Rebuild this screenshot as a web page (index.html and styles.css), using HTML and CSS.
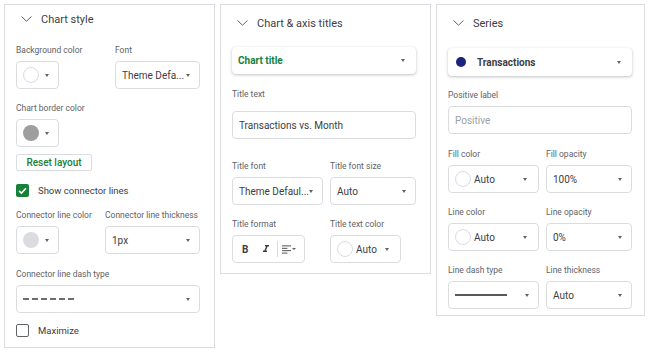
FILE: index.html
```html
<!DOCTYPE html>
<html lang="en">
<head>
  <meta charset="UTF-8">
  <meta name="viewport" content="width=device-width, initial-scale=1.0">
  <title>Chart editor</title>
  <link rel="stylesheet" href="styles.css">
</head>
<body>
  <div class="panels">

    <section class="panel">
      <div class="head">
        <svg class="chev" viewBox="0 0 11 6"><polyline points="0.5,0.5 5.5,5.2 10.5,0.5"/></svg>
        <span>Chart style</span>
      </div>
      <div class="pair first">
        <div class="field">
          <span class="label">Background color</span>
          <div class="ctrl color"><span class="swatch"></span><span class="arrow"></span></div>
        </div>
        <div class="field">
          <span class="label">Font</span>
          <div class="ctrl w85"><span class="val">Theme Defa...</span><span class="arrow"></span></div>
        </div>
      </div>
      <div class="field gap13">
        <span class="label">Chart border color</span>
        <div class="ctrl color"><span class="swatch grey"></span><span class="arrow"></span></div>
      </div>
      <button class="reset">Reset layout</button>
      <div class="check on gap13">
        <span class="box"><svg viewBox="0 0 13 13"><polyline points="3,6.8 5.4,9.1 10,4.2"/></svg></span>
        <span>Show connector lines</span>
      </div>
      <div class="pair gap12">
        <div class="field">
          <span class="label">Connector line color</span>
          <div class="ctrl color"><span class="swatch light"></span><span class="arrow"></span></div>
        </div>
        <div class="field">
          <span class="label">Connector line thickness</span>
          <div class="ctrl w95"><span class="val">1px</span><span class="arrow"></span></div>
        </div>
      </div>
      <div class="field gap14">
        <span class="label">Connector line dash type</span>
        <div class="ctrl"><span class="val"><svg class="dash" viewBox="0 0 52 2"><line x1="0" y1="1" x2="52" y2="1"/></svg></span><span class="arrow"></span></div>
      </div>
      <div class="check gap11">
        <span class="box"></span>
        <span>Maximize</span>
      </div>
    </section>

    <section class="panel titles">
      <div class="head tall">
        <svg class="chev" viewBox="0 0 11 6"><polyline points="0.5,0.5 5.5,5.2 10.5,0.5"/></svg>
        <span>Chart &amp; axis titles</span>
      </div>
      <div class="ctrl raised short">
        <span class="val strong green">Chart title</span><span class="arrow"></span>
      </div>
      <div class="field gap14">
        <span class="label wide">Title text</span>
        <div class="ctrl"><span class="val">Transactions vs. Month</span></div>
      </div>
      <div class="grid gap21">
        <div class="field">
          <span class="label">Title font</span>
          <div class="ctrl"><span class="val">Theme Defaul...</span><span class="arrow"></span></div>
        </div>
        <div class="field">
          <span class="label">Title font size</span>
          <div class="ctrl"><span class="val">Auto</span><span class="arrow"></span></div>
        </div>
      </div>
      <div class="grid gap13">
        <div class="field">
          <span class="label">Title format</span>
          <div class="ctrl format">
            <span class="bold">B</span>
            <svg class="italic" viewBox="0 0 24 24"><path d="M10 4v3h2.21l-3.42 8H6v3h8v-3h-2.21l3.42-8H18V4z"/></svg>
            <span class="sep"></span>
            <svg class="align" viewBox="0 0 10 9"><path d="M0 0.5h10M0 3.2h6M0 5.8h10M0 8.5h6"/></svg>
            <span class="arrow tiny"></span>
          </div>
        </div>
        <div class="field">
          <span class="label">Title text color</span>
          <div class="ctrl auto w71"><span class="swatch"></span><span class="val">Auto</span><span class="arrow"></span></div>
        </div>
      </div>
    </section>

    <section class="panel series">
      <div class="head tall">
        <svg class="chev" viewBox="0 0 11 6"><polyline points="0.5,0.5 5.5,5.2 10.5,0.5"/></svg>
        <span>Series</span>
      </div>
      <div class="ctrl raised">
        <span class="dot"></span><span class="val strong">Transactions</span><span class="arrow"></span>
      </div>
      <div class="field gap13">
        <span class="label">Positive label</span>
        <div class="ctrl"><span class="val hint">Positive</span></div>
      </div>
      <div class="grid gap14">
        <div class="field">
          <span class="label">Fill color</span>
          <div class="ctrl auto"><span class="swatch"></span><span class="val">Auto</span><span class="arrow"></span></div>
        </div>
        <div class="field">
          <span class="label">Fill opacity</span>
          <div class="ctrl"><span class="val">100%</span><span class="arrow"></span></div>
        </div>
      </div>
      <div class="grid gap13">
        <div class="field">
          <span class="label">Line color</span>
          <div class="ctrl auto"><span class="swatch"></span><span class="val">Auto</span><span class="arrow"></span></div>
        </div>
        <div class="field">
          <span class="label">Line opacity</span>
          <div class="ctrl"><span class="val">0%</span><span class="arrow"></span></div>
        </div>
      </div>
      <div class="grid gap13">
        <div class="field">
          <span class="label">Line dash type</span>
          <div class="ctrl"><span class="val"><svg class="solid" viewBox="0 0 52 2"><line x1="0" y1="1" x2="52" y2="1"/></svg></span><span class="arrow"></span></div>
        </div>
        <div class="field">
          <span class="label">Line thickness</span>
          <div class="ctrl"><span class="val">Auto</span><span class="arrow"></span></div>
        </div>
      </div>
    </section>

  </div>
</body>
</html>
```

FILE: styles.css
```css
body {
  margin: 0;
  background: #ffffff;
  color: #3c4043;
  font-family: Roboto, "Liberation Sans", Arial, sans-serif;
}
.panels {
  display: flex;
  align-items: flex-start;
  gap: 5px;
  padding: 4px 0 0 4px;
}
.panel {
  box-sizing: border-box;
  width: 211px;
  border: 1px solid #dadce0;
  padding: 0 14px 10px 11px;
}
.panel.series {
  width: 209px;
  padding-right: 12px;
  padding-bottom: 6px;
}
.head {
  height: 28px;
  display: flex;
  align-items: center;
  gap: 9px;
  padding-left: 5px;
  font-size: 11px;
  color: #3c4043;
}
.head.tall {
  height: 36px;
}
.chev {
  width: 11px;
  height: 6px;
  fill: none;
  stroke: #5f6368;
  stroke-width: 1;
}
.label {
  display: block;
  height: 12px;
  line-height: 12px;
  margin-bottom: 5px;
  font-size: 8.5px;
  color: #5f6368;
  white-space: nowrap;
}
.label.wide {
  margin-bottom: 11px;
}
.ctrl {
  box-sizing: border-box;
  height: 28px;
  display: flex;
  align-items: center;
  padding: 0 9px 0 6px;
  border: 1px solid #dadce0;
  border-radius: 4px;
  font-size: 10px;
  color: #3c4043;
}
.ctrl .val {
  flex: 1;
  display: flex;
  align-items: center;
  white-space: nowrap;
  overflow: hidden;
}
.arrow {
  flex: none;
  width: 0;
  height: 0;
  border-left: 2.5px solid transparent;
  border-right: 2.5px solid transparent;
  border-top: 3px solid #5f6368;
}
.pair {
  display: flex;
  justify-content: space-between;
}
.pair.first {
  margin-top: 11px;
}
.grid {
  display: grid;
  grid-template-columns: 91px 86px;
  column-gap: 7px;
  align-items: start;
}
.gap11 { margin-top: 11px; }
.gap12 { margin-top: 12px; }
.gap13 { margin-top: 13px; }
.gap14 { margin-top: 14px; }
.gap21 { margin-top: 21px; }

.ctrl.color {
  width: 43px;
  justify-content: space-between;
}
.w85 { width: 85px; }
.w95 { width: 95px; }
.w71 { width: 71px; }
.swatch {
  box-sizing: border-box;
  flex: none;
  width: 16px;
  height: 16px;
  border-radius: 50%;
  border: 1px solid #dadce0;
  background: #ffffff;
}
.swatch.grey {
  border: none;
  background: #9e9e9e;
}
.swatch.light {
  border: none;
  background: #dadce0;
}
.ctrl.auto {
  padding-right: 11px;
}
.ctrl.auto .swatch {
  margin-right: 3px;
}
.reset {
  display: block;
  box-sizing: border-box;
  height: 17px;
  width: 76px;
  margin-top: 7px;
  padding: 0;
  border: 1px solid #dadce0;
  border-radius: 2px;
  background: #ffffff;
  color: #188038;
  font-family: inherit;
  font-size: 10px;
  font-weight: 500;
}
.check {
  display: flex;
  align-items: center;
  gap: 9px;
  height: 13px;
  font-size: 9.5px;
  color: #3c4043;
}
.check .box {
  box-sizing: border-box;
  width: 13px;
  height: 13px;
  border: 1.5px solid #5f6368;
  border-radius: 2px;
}
.check.on .box {
  border: none;
  background: #188038;
}
.check .box svg {
  display: block;
  width: 13px;
  height: 13px;
  fill: none;
  stroke: #ffffff;
  stroke-width: 1.6;
}
.dash {
  width: 52px;
  height: 2px;
  stroke: #3c4043;
  stroke-width: 1.6;
  stroke-dasharray: 6 3;
}
.solid {
  width: 52px;
  height: 2px;
  stroke: #202124;
  stroke-width: 1.4;
}
.ctrl.raised {
  border: none;
  box-shadow: 0 1px 3px rgba(60, 64, 67, 0.3), 0 0 1px rgba(60, 64, 67, 0.15);
  padding-right: 11px;
  margin-top: 7px;
}
.ctrl.raised.short {
  height: 27px;
  margin-top: 6px;
}
.strong {
  font-weight: 700;
}
.green {
  color: #188038;
}
.dot {
  flex: none;
  width: 10px;
  height: 10px;
  margin: 0 11px 0 2px;
  border-radius: 50%;
  background: #1a237e;
}
.hint {
  color: #9aa0a6;
}
.ctrl.format {
  width: 73px;
  padding: 0 0 0 9px;
}
.format .bold {
  font-size: 10px;
  font-weight: 700;
  width: 12px;
}
.format .italic {
  width: 12px;
  height: 12px;
  fill: #3c4043;
  margin-left: 6px;
}
.format .sep {
  width: 1px;
  height: 16px;
  background: #dadce0;
  margin: 0 4px 0 5px;
}
.format .align {
  width: 9px;
  height: 9px;
  fill: none;
  stroke: #3c4043;
  stroke-width: 1;
}
.arrow.tiny {
  margin-left: 1px;
  border-left-width: 2px;
  border-right-width: 2px;
  border-top-width: 2.5px;
}
```
